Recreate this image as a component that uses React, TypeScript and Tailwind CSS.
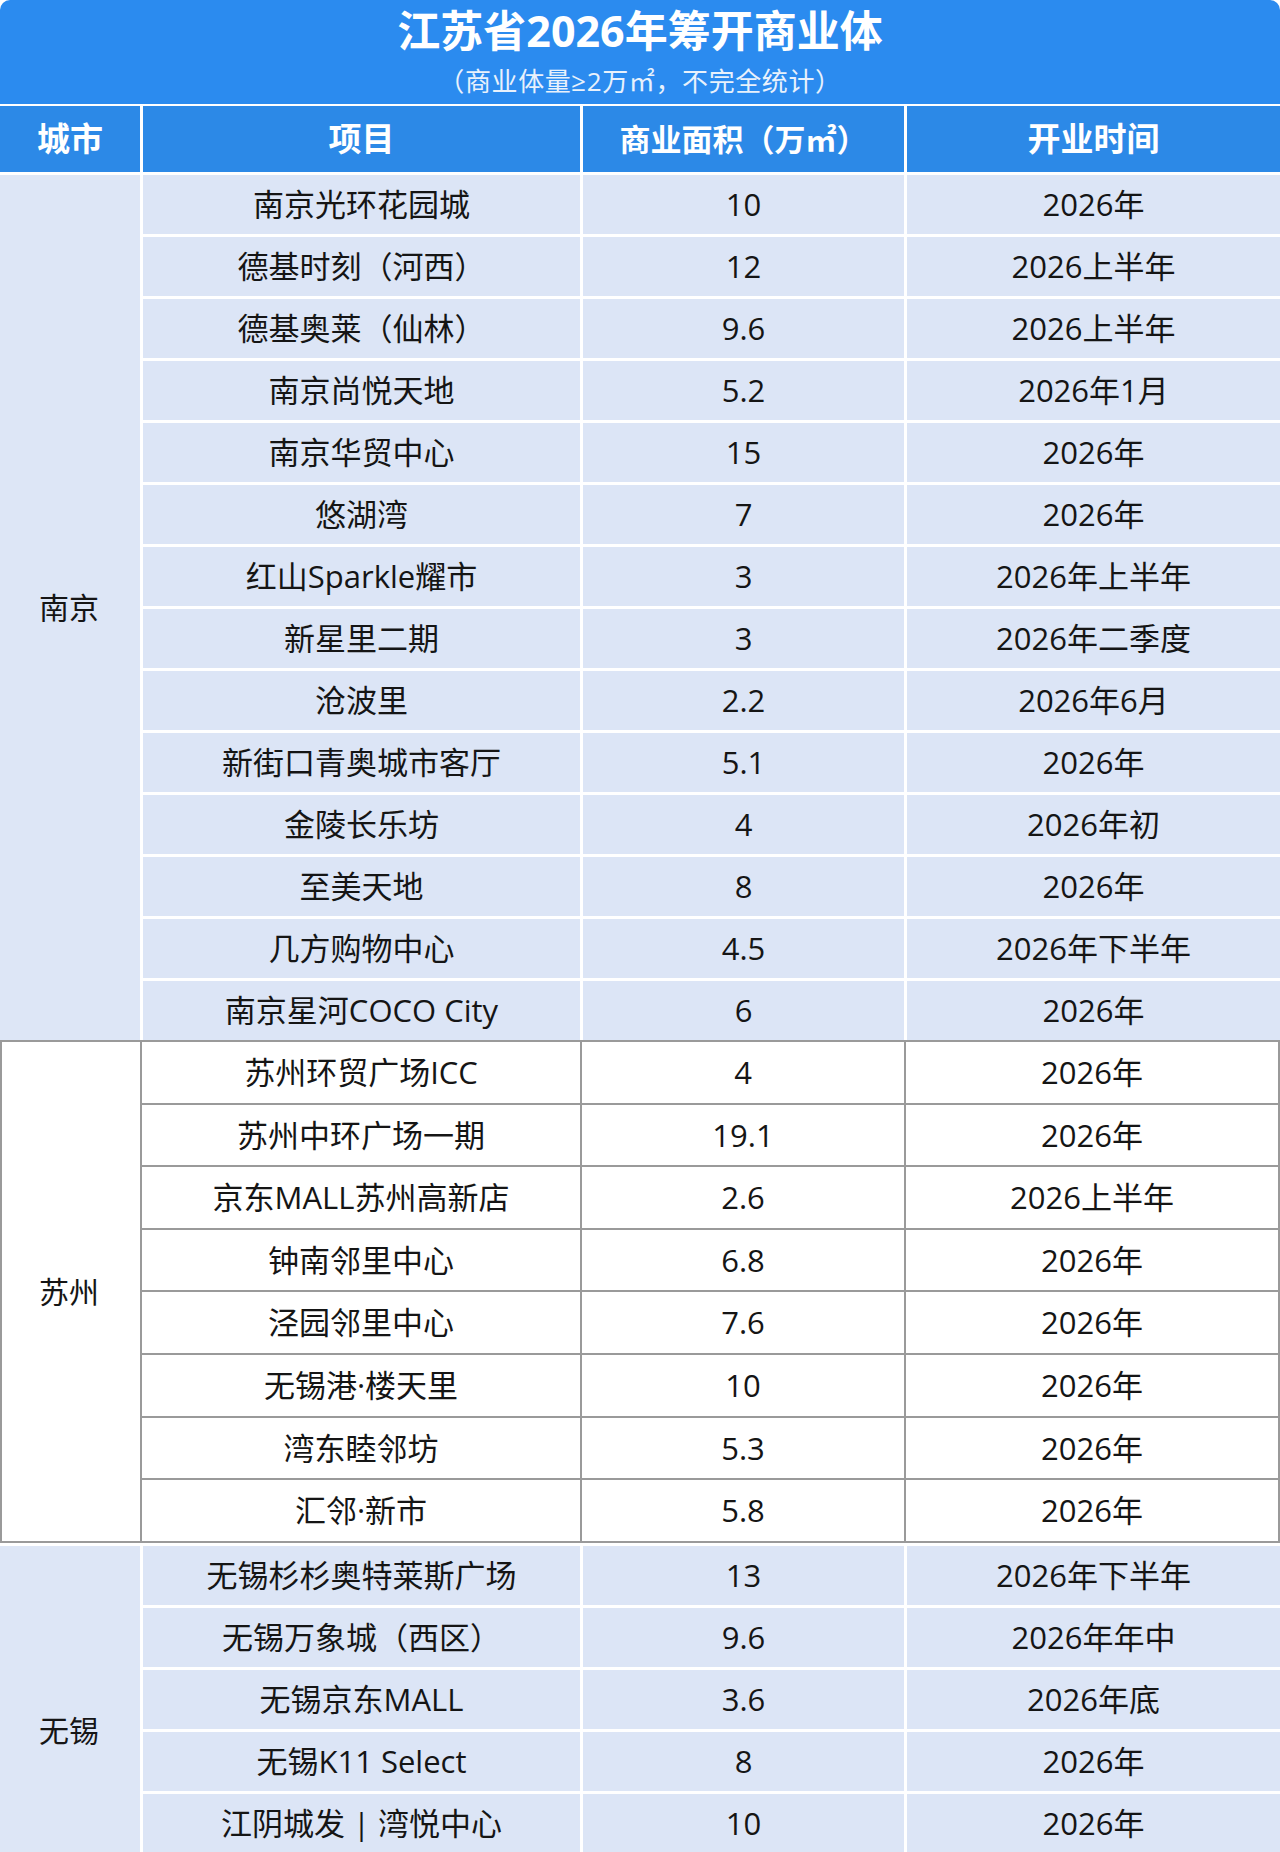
import React from 'react';

interface Row {
  name: string;
  area: string;
  open: string;
}

interface Group {
  city: string;
  span: string;
  tone: 'blue' | 'white';
  rows: Row[];
}

const groups: Group[] = [
  {
    city: '南京',
    span: 'row-span-14',
    tone: 'blue',
    rows: [
      { name: '南京光环花园城', area: '10', open: '2026年' },
      { name: '德基时刻（河西）', area: '12', open: '2026上半年' },
      { name: '德基奥莱（仙林）', area: '9.6', open: '2026上半年' },
      { name: '南京尚悦天地', area: '5.2', open: '2026年1月' },
      { name: '南京华贸中心', area: '15', open: '2026年' },
      { name: '悠湖湾', area: '7', open: '2026年' },
      { name: '红山Sparkle耀市', area: '3', open: '2026年上半年' },
      { name: '新星里二期', area: '3', open: '2026年二季度' },
      { name: '沧波里', area: '2.2', open: '2026年6月' },
      { name: '新街口青奥城市客厅', area: '5.1', open: '2026年' },
      { name: '金陵长乐坊', area: '4', open: '2026年初' },
      { name: '至美天地', area: '8', open: '2026年' },
      { name: '几方购物中心', area: '4.5', open: '2026年下半年' },
      { name: '南京星河COCO City', area: '6', open: '2026年' },
    ],
  },
  {
    city: '苏州',
    span: 'row-span-8',
    tone: 'white',
    rows: [
      { name: '苏州环贸广场ICC', area: '4', open: '2026年' },
      { name: '苏州中环广场一期', area: '19.1', open: '2026年' },
      { name: '京东MALL苏州高新店', area: '2.6', open: '2026上半年' },
      { name: '钟南邻里中心', area: '6.8', open: '2026年' },
      { name: '泾园邻里中心', area: '7.6', open: '2026年' },
      { name: '无锡港·楼天里', area: '10', open: '2026年' },
      { name: '湾东睦邻坊', area: '5.3', open: '2026年' },
      { name: '汇邻·新市', area: '5.8', open: '2026年' },
    ],
  },
  {
    city: '无锡',
    span: 'row-span-6',
    tone: 'blue',
    rows: [
      { name: '无锡杉杉奥特莱斯广场', area: '13', open: '2026年下半年' },
      { name: '无锡万象城（西区）', area: '9.6', open: '2026年年中' },
      { name: '无锡京东MALL', area: '3.6', open: '2026年底' },
      { name: '无锡K11 Select', area: '8', open: '2026年' },
      { name: '江阴城发 | 湾悦中心', area: '10', open: '2026年' },
      { name: '', area: '', open: '' },
    ],
  },
];

function BlueGroup({ group }: { group: Group }) {
  return (
    <div className="grid grid-cols-[140px_437px_321px_373px] auto-rows-[59px] gap-[3px] pt-[3px] bg-white">
      <div className={`${group.span} bg-[#dde6f6] flex items-center pl-[39px] text-[30px] text-[#151515]`}>
        {group.city}
      </div>
      {group.rows.map((r, i) => (
        <React.Fragment key={i}>
          <div className="bg-[#dce5f6] flex items-center justify-center text-[31px] text-[#151515]">{r.name}</div>
          <div className="bg-[#dce5f6] flex items-center justify-center text-[31px] text-[#151515]">{r.area}</div>
          <div className="bg-[#dce5f6] flex items-center justify-center text-[31px] text-[#151515]">{r.open}</div>
        </React.Fragment>
      ))}
    </div>
  );
}

function WhiteGroup({ group }: { group: Group }) {
  return (
    <div className="grid grid-cols-[138px_438px_322px_372px] auto-rows-[60.6px] gap-[2px] p-[2px] bg-[#9a9a9a]">
      <div className={`${group.span} bg-white flex items-center pl-[37px] text-[30px] text-[#151515]`}>
        {group.city}
      </div>
      {group.rows.map((r, i) => (
        <React.Fragment key={i}>
          <div className="bg-white flex items-center justify-center text-[31px] text-[#151515]">{r.name}</div>
          <div className="bg-white flex items-center justify-center text-[31px] text-[#151515]">{r.area}</div>
          <div className="bg-white flex items-center justify-center text-[31px] text-[#151515]">{r.open}</div>
        </React.Fragment>
      ))}
    </div>
  );
}

export default function App() {
  return (
    <div
      className="w-[1280px] h-[1852px] overflow-hidden bg-white"
      style={{ fontFamily: '"Open Sans", "Noto Sans CJK SC", sans-serif' }}
    >
      {/* Title */}
      <div className="h-[104px] bg-[#2b8bef] rounded-t-[10px] flex flex-col items-center text-white">
        <h1 className="mt-[7px] text-[43px] font-bold leading-[48px]">江苏省2026年筹开商业体</h1>
        <p className="mt-[8px] text-[26px] leading-[36px] tracking-[0.6px] text-[#e8f1fc]">（商业体量≥2万㎡，不完全统计）</p>
      </div>

      {/* Header */}
      <div className="grid grid-cols-[140px_437px_321px_373px] gap-[3px] pt-[2px] bg-white">
        <div className="h-[66px] bg-[#2c89e7] flex items-center pl-[37px] text-[33px] font-semibold text-white">城市</div>
        <div className="h-[66px] bg-[#2c89e7] flex items-center justify-center text-[33px] font-semibold text-white">项目</div>
        <div className="h-[66px] bg-[#2c89e7] flex items-center justify-center text-[31px] font-semibold text-white">商业面积（万㎡）</div>
        <div className="h-[66px] bg-[#2c89e7] flex items-center justify-center text-[33px] font-semibold text-white">开业时间</div>
      </div>

      {groups.map((g) =>
        g.tone === 'blue' ? <BlueGroup key={g.city} group={g} /> : <WhiteGroup key={g.city} group={g} />
      )}
    </div>
  );
}
